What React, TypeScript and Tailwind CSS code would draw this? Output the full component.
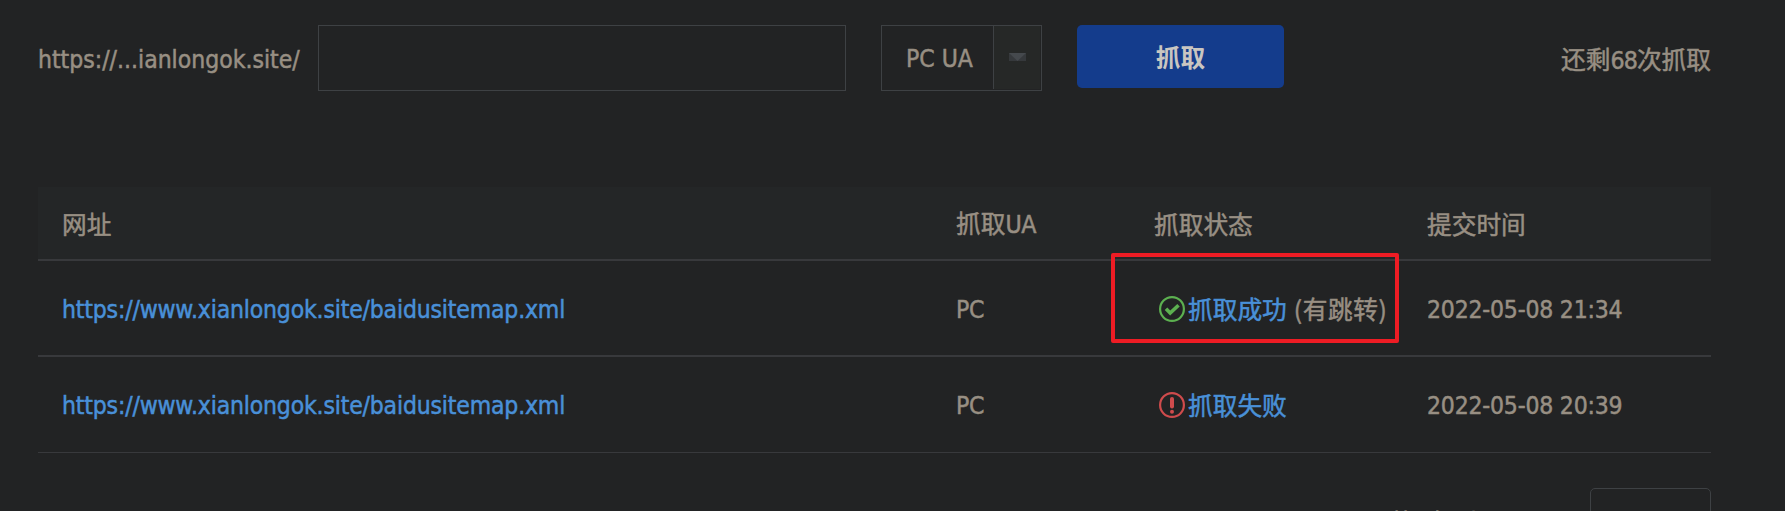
import React from "react";

const sans = "font-['DejaVu_Sans_Condensed','DejaVu_Sans','Noto_Sans_CJK_SC',sans-serif]";
const cjk = "font-['Noto_Sans_CJK_SC',sans-serif] text-[24.7px]";

function SuccessIcon() {
  return (
    <svg width="26" height="26" viewBox="0 0 26 26" fill="none" stroke="#5cb050" className="shrink-0">
      <circle cx="13" cy="13" r="11.9" strokeWidth="2.2" />
      <path d="M7 12.8l4.2 4.2 8.3-7.8" strokeWidth="3.6" />
    </svg>
  );
}

function FailIcon() {
  return (
    <svg width="26" height="26" viewBox="0 0 26 26" fill="none" stroke="#cf4b4c" className="shrink-0">
      <circle cx="13" cy="13" r="11.9" strokeWidth="2.2" />
      <path d="M13 7v7.5" strokeWidth="4" strokeLinecap="round" />
      <circle cx="13" cy="19.8" r="2" fill="#cf4b4c" stroke="none" />
    </svg>
  );
}

const cols = "grid grid-cols-[894px_198px_273px_1fr] items-center pl-6";

const rows = [
  { ok: true, status: "抓取成功", note: "有跳转", time: "2022-05-08 21:34" },
  { ok: false, status: "抓取失败", note: "", time: "2022-05-08 20:39" },
];

export default function App() {
  return (
    <div className={`h-[511px] w-[1785px] overflow-hidden bg-[#222324] pl-[38px] pr-[74px] pt-[25px] text-[24.5px] leading-[36px] whitespace-nowrap text-[#988f83] [-webkit-text-stroke:0.5px] ${sans}`}>
      <div className="flex h-[66px] items-start">
        <div className="w-[280px] pt-[17px] tracking-[0px]">https://...ianlongok.site/</div>
        <div className="h-[66px] w-[528px] border border-[#3e4144]" />
        <div className="ml-[35px] flex h-[66px] w-[161px] border border-[#3e4144] pb-px pr-px">
          <div className="grow pl-[24px] pt-[15px] tracking-[0px]">PC UA</div>
          <div className="flex w-[47px] shrink-0 justify-center border-l border-[#3e4144] bg-[#262827] pt-[27px]">
            <svg width="17" height="8" viewBox="0 0 17 8">
              <rect width="17" height="8" fill="#36393c" />
              <path d="M0 0h17l-8.5 8z" fill="#45494d" />
            </svg>
          </div>
        </div>
        <button className={`ml-[35px] h-[63px] w-[207px] rounded-[5px] bg-[#143c8c] pb-[2px] font-bold text-[#c9c6c1] [-webkit-text-stroke:0px] ${cjk}`}>抓取</button>
        <div className={`ml-auto pt-[15px] ${cjk}`}>还剩<span className={`tracking-[-0.9px] ${sans}`}>68</span>次抓取</div>
      </div>

      <div className={`mt-[96px] h-[74px] border-b-2 border-[#38393c] bg-[#242627] ${cols}`}>
        <div className={cjk}>网址</div>
        <div className={cjk}>抓取<span className={`tracking-[-0.3px] ${sans}`}>UA</span></div>
        <div className={cjk}>抓取状态</div>
        <div className={cjk}>提交时间</div>
      </div>
      {rows.map((row) => (
        <div key={row.time} className={`relative h-[96px] border-[#38393c] ${row.ok ? "border-b-2" : "border-b pb-px"} ${cols}`}>
          <a className="pt-[3px] tracking-[-0.17px] text-[#4990d8]">https://www.xianlongok.site/baidusitemap.xml</a>
          <div className="pt-[3px] tracking-[-0.3px]">PC</div>
          <div className="flex items-start pl-[5px]">
            <span className="pt-[6px]">{row.ok ? <SuccessIcon /> : <FailIcon />}</span>
            <a className={`ml-[3px] text-[#4990d8] ${cjk}`}>{row.status}</a>
            {row.note && <span className={`ml-[7px] tracking-[0.6px] ${cjk}`}>({row.note})</span>}
          </div>
          <div className="pt-[3px] tracking-[-0.2px]">{row.time}</div>
          {row.ok && <div className="absolute left-[1073px] top-[-8px] h-[90px] w-[288px] rounded-[2px] border-4 border-[#ee1c24]" />}
        </div>
      ))}
      <div className="mt-[35px] flex justify-end">
        <div className={`mr-[54px] flex pt-[15px] ${cjk}`}>
          <span>共2条</span>
          <span className="ml-[10px]">上一页</span>
        </div>
        <div className="h-[60px] w-[121px] rounded-[5px] border border-[#3e4144]" />
      </div>
    </div>
  );
}
